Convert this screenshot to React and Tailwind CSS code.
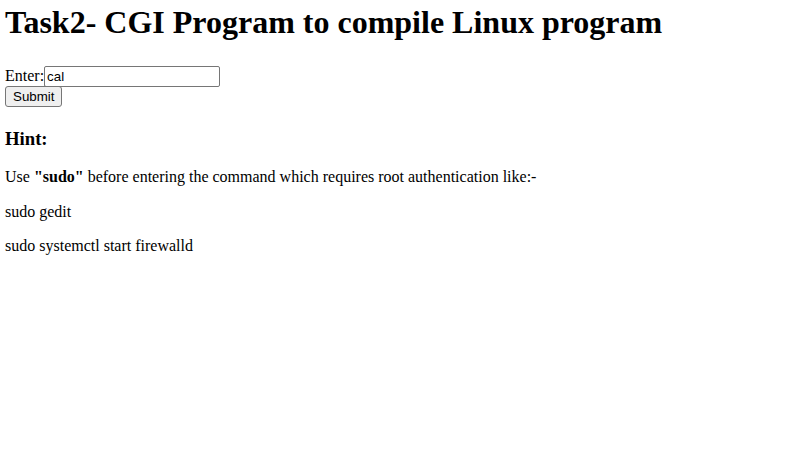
export default function App() {
  return (
    <div className="min-h-screen bg-white text-black px-[5px] pt-[4px] text-[16px] font-['Liberation_Serif','Times_New_Roman',serif]">
      <h1 className="text-[32px] font-bold leading-[37px] mb-[23px]">Task2- CGI Program to compile Linux program</h1>
      <form onSubmit={(e) => e.preventDefault()}>
        <label className="flex items-baseline h-[21px]">
          <span>Enter:</span>
          <input
            defaultValue="cal"
            className="w-[176px] h-[21px] border border-[#767676] rounded-[2px] px-[2px] text-[13.33px] text-black font-['Liberation_Sans',Arial,sans-serif] outline-none"
          />
        </label>
        <button
          type="submit"
          className="block mt-[1px] h-[21px] px-[7px] bg-[#efefef] border border-[#767676] rounded-[3px] text-[13.33px] leading-[15px] font-['Liberation_Sans',Arial,sans-serif] text-black"
        >
          Submit
        </button>
      </form>
      <h3 className="text-[18.72px] font-bold leading-[21.5px] mt-[21px] mb-[18.72px]">Hint:</h3>
      <p className="leading-[18.4px] mb-[16px]">
        Use <b>"sudo"</b> before entering the command which requires root authentication like:-
      </p>
      <p className="leading-[18.4px] mb-[16px]">sudo gedit</p>
      <p className="leading-[18.4px] mb-[16px]">sudo systemctl start firewalld</p>
    </div>
  );
}
